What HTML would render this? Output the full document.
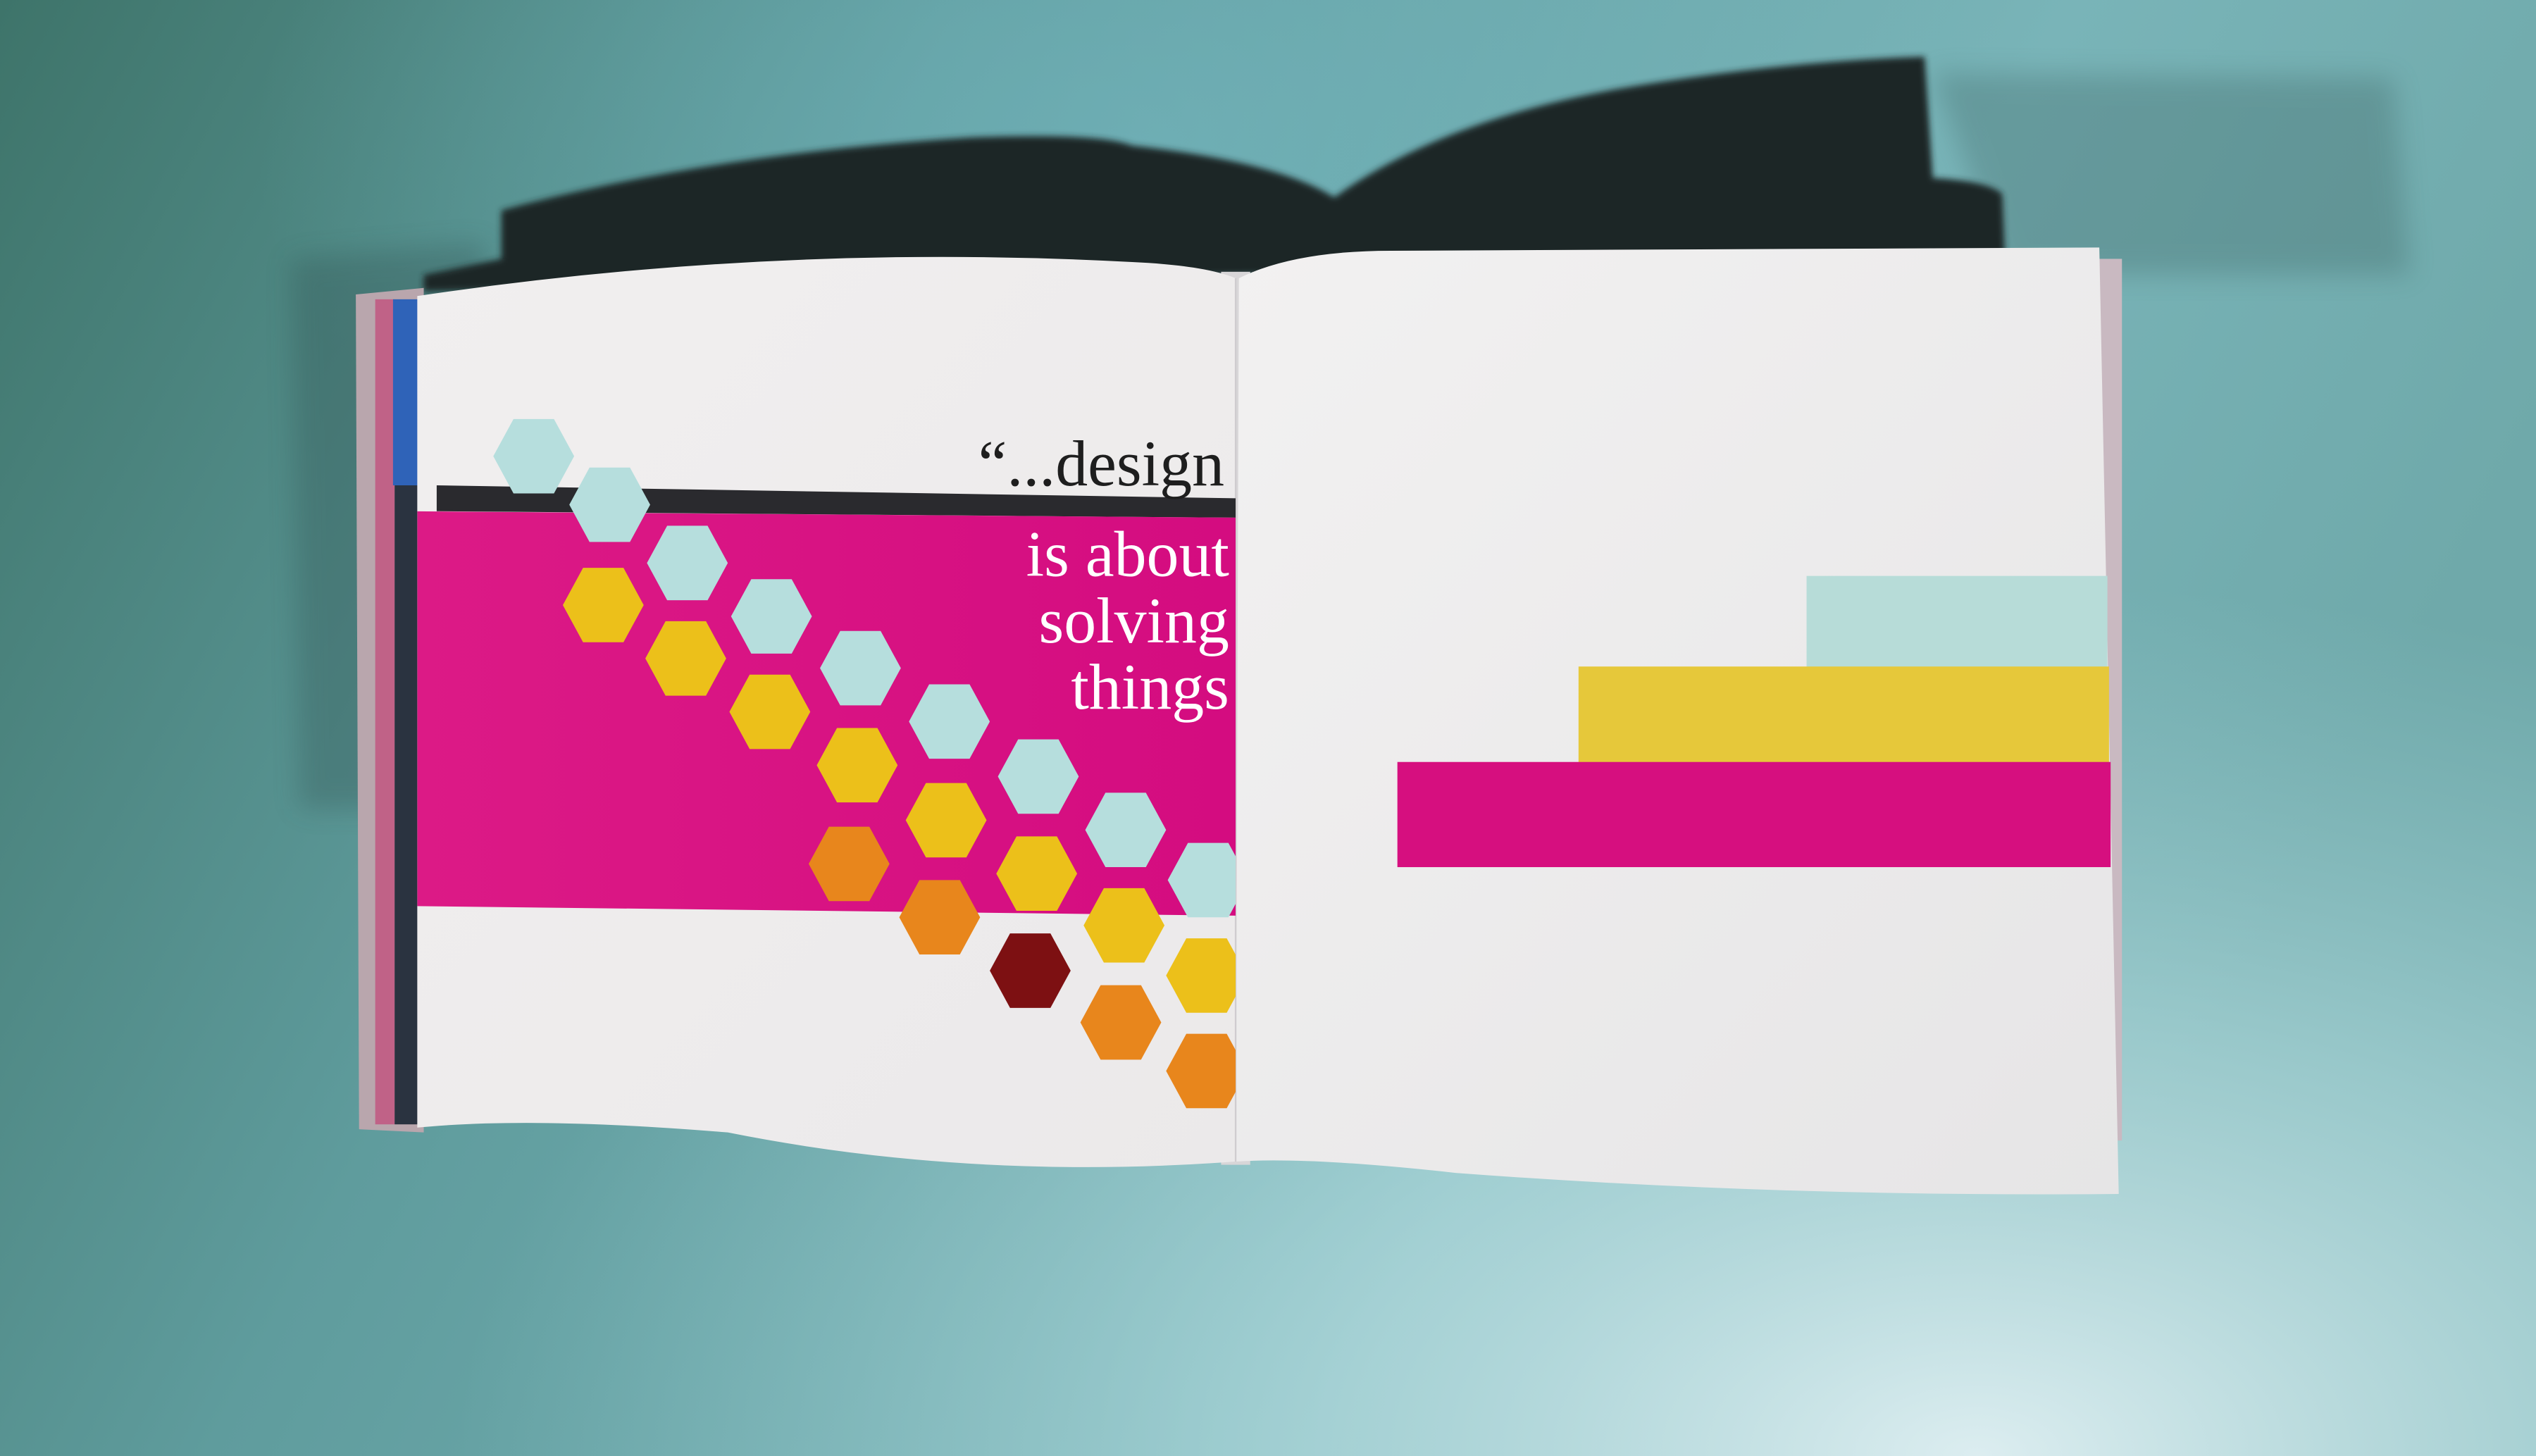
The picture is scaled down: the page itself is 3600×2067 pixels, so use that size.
<!DOCTYPE html>
<html><head><meta charset="utf-8"><style>html,body{margin:0;padding:0;width:3600px;height:2067px;overflow:hidden;background:#7fb5b6}svg{display:block}</style></head>
<body>
<svg width="3600" height="2067" viewBox="0 0 1568 900" preserveAspectRatio="none" xmlns="http://www.w3.org/2000/svg">
<defs>
<linearGradient id="bgl" x1="0" y1="0" x2="1" y2="0.3">
<stop offset="0" stop-color="#3e746a"/><stop offset="0.35" stop-color="#5f9c9d"/><stop offset="0.75" stop-color="#79b4b8"/><stop offset="1" stop-color="#6fa9aa"/>
</linearGradient>
<radialGradient id="bgr" cx="0.78" cy="1.0" r="0.6">
<stop offset="0" stop-color="#e2f1f4" stop-opacity="0.95"/><stop offset="0.5" stop-color="#b5dde0" stop-opacity="0.6"/><stop offset="1" stop-color="#9fd0d4" stop-opacity="0"/>
</radialGradient>
<radialGradient id="bgt" cx="0.45" cy="0.1" r="0.35">
<stop offset="0" stop-color="#74b6bf" stop-opacity="0.6"/><stop offset="1" stop-color="#74b6bf" stop-opacity="0"/>
</radialGradient>
<linearGradient id="pk" x1="0" y1="0" x2="1" y2="0"><stop offset="0" stop-color="#dc1a86"/><stop offset="1" stop-color="#d40c80"/></linearGradient>
<linearGradient id="rp" x1="0" y1="0" x2="1" y2="1"><stop offset="0" stop-color="#f2f1f1"/><stop offset="1" stop-color="#e6e5e6"/></linearGradient>
<linearGradient id="lp" x1="0" y1="0" x2="1" y2="1"><stop offset="0" stop-color="#f1efef"/><stop offset="1" stop-color="#ebe9ea"/></linearGradient>
<filter id="bl" x="-20%" y="-20%" width="140%" height="140%"><feGaussianBlur stdDeviation="8"/></filter>
<filter id="bl2" x="-20%" y="-20%" width="140%" height="140%"><feGaussianBlur stdDeviation="2"/></filter>
<path id="h" d="M-25 0 L-12.5 -23 L12.5 -23 L25 0 L12.5 23 L-12.5 23 Z"/>
<clipPath id="lc"><path d="M258,183 Q480,150 700,162 Q745,164 764,172 L764,718 Q600,730 450,700 Q330,690 258,697 Z"/></clipPath>
</defs>
<rect width="1568" height="900" fill="url(#bgl)"/>
<rect width="1568" height="900" fill="url(#bgt)"/>
<rect width="1568" height="900" fill="url(#bgr)"/>
<!-- soft shadows -->
<path d="M1195 45 L1480 48 L1490 170 L1240 170 Z" fill="#2f4f4e" opacity="0.25" filter="url(#bl)"/>
<path d="M180 160 L300 150 L300 500 L185 500 Z" fill="#27403f" opacity="0.25" filter="url(#bl)"/>
<!-- dark shadow -->
<path d="M310 130 Q440 95 600 85 Q680 82 700 90 Q790 100 825 122 Q890 75 1000 55 Q1100 38 1190 35 L1195 110 Q1230 112 1238 120 L1240 165 L760 170 L262 180 L262 170 L310 160 Z" fill="#1d2626" filter="url(#bl2)"/>
<!-- back cover -->
<polygon points="220,182 262,178 262,700 222,698" fill="#b9a6ad"/>
<rect x="232" y="185" width="12" height="510" fill="#c4366e" opacity="0.6"/>
<rect x="243" y="185" width="17" height="115" fill="#2f63b8"/>
<rect x="244" y="300" width="16" height="395" fill="#2a3340"/>
<rect x="1298" y="160" width="14" height="545" fill="#c9b9c1"/>
<rect x="755" y="168" width="18" height="552" fill="#d8d6d8"/>
<!-- pages -->
<path d="M766,172 Q800,155 860,155 L1298,153 L1310,738 Q1100,740 900,725 Q810,715 764,718 Z" fill="url(#rp)"/>
<path d="M258,183 Q480,150 700,162 Q745,164 764,172 L764,718 Q600,730 450,700 Q330,690 258,697 Z" fill="url(#lp)"/>
<line x1="764" y1="172" x2="764" y2="718" stroke="#cfcccf" stroke-width="1"/>
<g clip-path="url(#lc)">
<polygon points="270,300 764,308 764,320 270,316" fill="#2a2a2e"/>
<polygon points="250,316 764,320 764,566 250,560" fill="url(#pk)"/>
<g fill="#b6dedd">
<use href="#h" x="330" y="282"/><use href="#h" x="377" y="312"/><use href="#h" x="425" y="348"/><use href="#h" x="477" y="381"/><use href="#h" x="532" y="413"/><use href="#h" x="587" y="446"/><use href="#h" x="642" y="480"/><use href="#h" x="696" y="513"/><use href="#h" x="747" y="544"/>
</g>
<g fill="#ecc01a">
<use href="#h" x="373" y="374"/><use href="#h" x="424" y="407"/><use href="#h" x="476" y="440"/><use href="#h" x="530" y="473"/><use href="#h" x="585" y="507"/><use href="#h" x="641" y="540"/><use href="#h" x="695" y="572"/><use href="#h" x="746" y="603"/>
</g>
<g fill="#e8861c">
<use href="#h" x="525" y="534"/><use href="#h" x="581" y="567"/><use href="#h" x="693" y="632"/><use href="#h" x="746" y="662"/>
</g>
<use href="#h" x="637" y="600" fill="#7d1012"/>
</g>
<g font-family="Liberation Serif, serif" text-anchor="end">
<text x="757" y="300" font-size="40" fill="#1e1e1e">“...design</text>
<g fill="#ffffff" font-size="40">
<text x="760" y="356">is about</text><text x="760" y="397">solving</text><text x="760" y="438">things</text>
</g>
</g>
<rect x="1117" y="356" width="186" height="57" fill="#b7dcd8"/>
<rect x="976" y="412" width="328" height="60" fill="#e6c83a"/>
<rect x="864" y="471" width="441" height="65" fill="#d60f7f"/>
</svg>
</body></html>
